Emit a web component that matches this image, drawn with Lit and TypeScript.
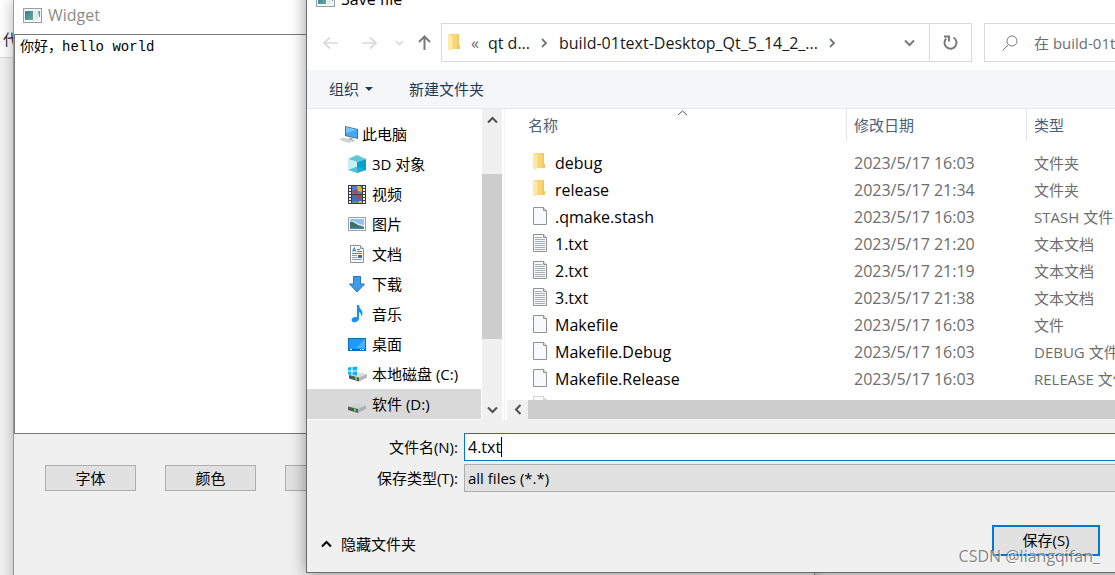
import { LitElement, html, css, svg } from "lit";
import { customElement } from "lit/decorators.js";

const sans = css`"Open Sans", "Noto Sans", "Noto Sans CJK SC", sans-serif`;

const glyphs: Record<string, unknown> = {
  app: svg`
    <defs><linearGradient id="app" x1="0" y1="0" x2="1" y2="1"><stop offset="0" stop-color="#3f74a8"/><stop offset="1" stop-color="#5cb487"/></linearGradient></defs>
    <rect x=".5" y=".5" width="18" height="14" fill="#f4f5f6" stroke="#9a9ea6"/>
    <rect x="2" y="3" width="8" height="9" fill="url(#app)"/>
    <rect x="11" y="3" width="4" height="9" fill="#e6e9ea"/>
    <path d="M15 3h2v6h-1z" fill="#58a98c"/>`,
  back: svg`<path d="M16 8H2M8 2.500L2 8L8 13.500" fill="none" stroke="currentColor" stroke-width="1.700"/>`,
  forward: svg`<path d="M1 8H15M9 2.500L15 8L9 13.500" fill="none" stroke="currentColor" stroke-width="1.700"/>`,
  up: svg`<path d="M6.500 15V1.500M1 7L6.500 1.500L12 7" fill="none" stroke="currentColor" stroke-width="2"/>`,
  down: svg`<path d="M1 1.500L5.500 6L10 1.500" fill="none" stroke="currentColor" stroke-width="2"/>`,
  recent: svg`<path d="M1 1L4.500 4.500L8 1" fill="none" stroke="currentColor" stroke-width="1.700"/>`,
  chevronUp: svg`<path d="M1 6.500L5.500 2L10 6.500" fill="none" stroke="currentColor" stroke-width="2"/>`,
  sort: svg`<path d="M1 5L5.500 1L10 5" fill="none" stroke="currentColor" stroke-width="1"/>`,
  right: svg`<path d="M1 1L5 5L1 9" fill="none" stroke="currentColor" stroke-width="1.800"/>`,
  left: svg`<path d="M6.500 1L2 5.500L6.500 10" fill="none" stroke="currentColor" stroke-width="2"/>`,
  caret: svg`<path d="M0 0h8L4 4z" fill="currentColor"/>`,
  refresh: svg`<path d="M10.500 2.500A6 6 0 1 1 3.200 3.500" fill="none" stroke="currentColor" stroke-width="2"/><path d="M1 1.500h5v5" fill="none" stroke="currentColor" stroke-width="2"/>`,
  search: svg`<circle cx="10" cy="6" r="5" fill="none" stroke="currentColor"/><path d="M6.300 9.700L.5 15.500" stroke="currentColor" fill="none"/>`,
  folder: svg`
    <defs><linearGradient id="fold" x1="0" y1="0" x2="1" y2="0"><stop offset="0" stop-color="#f5d178"/><stop offset="1" stop-color="#fad878"/></linearGradient></defs>
    <path d="M1 0H11V11H12V15H1z" fill="url(#fold)"/>
    <path d="M9 0h2v11h1v4H9z" fill="#f1c962"/>
    <path d="M0 0L4.500 2V14.500L3 17L0 15z" fill="#ffe9a6"/>`,
  file: svg`
    <path d="M.5 .5H10.500L13.500 3.500V17.500H.5z" fill="#f8f9fa" stroke="#8f9193"/>
    <path d="M10.500 .5V3.500H13.500" fill="#dfe1e3" stroke="#8f9193"/>`,
  text: svg`
    <path d="M.5 .5H10.500L13.500 3.500V17.500H.5z" fill="#f8f9fa" stroke="#8f9193"/>
    <path d="M10.500 .5V3.500H13.500" fill="#dfe1e3" stroke="#8f9193"/>
    <path d="M2 3.500H9M2 5.500H12M2 7.500H12M2 9.500H12M2 11.500H12M2 13.500H12M2 15.500H12" stroke="#a9abad"/>`,
  computer: svg`
    <path d="M6 0L19 3V13L6 10z" fill="#5c6b78"/>
    <path d="M7 1L18 3.700V12L7 9.300z" fill="#3fa9f5"/>
    <path d="M7 1L18 3.700L7 7z" fill="#74c5fb"/>
    <path d="M11 11.500l3 .7-1 1.500 3 1-2 1-5-2z" fill="#a3abb3"/>
    <path d="M0 13.500L4 11.500L14 14.500L10 17z" fill="#cdd2d6"/>`,
  cube: svg`
    <path d="M9 0L18 4L9 7L0 4z" fill="#5ac8d8"/>
    <path d="M0 4L9 7V18L0 15z" fill="#c8f1f2"/>
    <path d="M18 4L9 7V18L18 15z" fill="#0a9fce"/>
    <path d="M0 15L9 11.500L18 15L9 18z" fill="#2bb4cf" opacity=".75"/>`,
  video: svg`
    <rect width="18" height="19" fill="#3b3b3f"/>
    <rect x="4" y="1" width="10" height="8" fill="#4d7fd0"/>
    <rect x="4" y="10" width="10" height="8" fill="#3f6ec4"/>
    <path d="M9 1h3l2 3v3l-4-1z" fill="#e5b91f"/><path d="M4 7l3-2 4 2-4 2z" fill="#d23b32"/>
    <path d="M9 10h4v2l-3 2z" fill="#c4412f"/><path d="M4 17l4-1 2 2H4z" fill="#56a653"/><path d="M11 16h3v2h-4z" fill="#dfbd3b"/>
    <path d="M2 1V18M16 1V18" stroke="#f2f2f2" stroke-width="2" stroke-dasharray="2 1"/>`,
  picture: svg`
    <rect x=".5" y=".5" width="17" height="13" fill="#fff" stroke="#9b9fa4"/>
    <rect x="2" y="2" width="14" height="10" fill="#8fc3ee"/>
    <path d="M2 5l4-1 5 3 5 1v4H2z" fill="#d6e9f2"/>
    <path d="M2 5l3 0 5 3 6 2v2H2z" fill="#3e6f67"/><path d="M2 10h14v2H2z" fill="#447da4"/>`,
  document: svg`
    <path d="M.5 .5H10.500L13.500 3.500V17.500H.5z" fill="#fbfcfd" stroke="#8f9193"/>
    <path d="M10.500 .5V3.500H13.500" fill="#dfe1e3" stroke="#8f9193"/>
    <path d="M2.500 6.500L4.500 2.500L5.500 6.500M3 5.500h2" stroke="#2a7fc5" fill="none"/>
    <path d="M7 4.500h3M7 6.500h5M2 8.500h10" stroke="#2a8fd8"/>
    <path d="M2 10.500h5M2 12.500h5M2 14.500h10" stroke="#8f9aa4"/><rect x="8" y="10" width="4" height="3" fill="#35719e"/>`,
  download: svg`<path d="M4.500 .5h7V8H15.500L8 16L.5 8H4.500z" fill="#3f9ae8" stroke="#2377c6"/>`,
  music: svg`<path d="M6 0H8C8 4 12 4.500 11.500 9.500L10 11.500C10.500 8.500 9 7.500 8 7V13C8 16 4.500 18 2 17C-.5 16 .5 12 4 12C5 11.800 6 12.200 6 12.500z" fill="#0f93f4"/>`,
  desktop: svg`
    <rect x=".5" y=".5" width="17" height="12" fill="#1b9cf6" stroke="#0d6cbb"/>
    <path d="M17 1L8 10H17z" fill="#45b3ff"/>
    <path d="M1 11.500H17" stroke="#0a5ea8"/><path d="M2 11.500h2M12 11.500h1M14 11.500h2" stroke="#fff"/>`,
  windrive: svg`
    <path d="M1 9L9 6L19 8L11 11.500z" fill="#dcdee0"/><path d="M1 9L11 11.500V15.500L1 12.500z" fill="#55585b"/>
    <path d="M11 11.500L19 8V11.500L11 15.500z" fill="#b4b7ba"/><rect x="7" y="11" width="2" height="3" fill="#3fdc4a"/>
    <path d="M0 1.500L3.500 1V4.500H0zM4.500 1L9 .5V4.500H4.500zM0 5.500H3.500V9L0 8.500zM4.500 5.500H9V9.500L4.500 9z" fill="#12b5ea"/>`,
  drive: svg`
    <path d="M0 10.500L8 7.500L18 9.500L10 13z" fill="#d0d2d4"/><path d="M0 10.500L10 13V17L0 14z" fill="#55585b"/>
    <path d="M10 13L18 9.500V13L10 17z" fill="#aeb1b4"/><rect x="6" y="12.500" width="2" height="3" fill="#3fdc4a"/>`,
};

const sizes: Record<string, [number, number]> = {
  app: [19, 15], back: [16, 16], forward: [16, 16], up: [13, 16], down: [11, 8], recent: [9, 6], chevronUp: [11, 8],
  sort: [11, 6], right: [7, 10], left: [8, 11], caret: [8, 4], refresh: [15, 15], search: [16, 16],
  folder: [12, 17], file: [14, 18], text: [14, 18], computer: [19, 17], cube: [18, 18], video: [18, 19],
  picture: [18, 14], document: [14, 18], download: [16, 17], music: [12, 18], desktop: [18, 13],
  windrive: [19, 16], drive: [18, 17],
};

const icon = (name: string) => {
  const [w, h] = sizes[name];
  return html`<svg class="icon" width=${w} height=${h} viewBox="0 0 ${w} ${h}" aria-hidden="true">${glyphs[name]}</svg>`;
};

const base = css`
  * { box-sizing: border-box; }
  .icon { display: block; flex: none; overflow: visible; }
  button, input, select, textarea { font: inherit; color: inherit; margin: 0; border-radius: 0; outline: none; }
  a { color: inherit; text-decoration: none; }
`;

@customElement("widget-window")
class WidgetWindow extends LitElement {
  static styles = [base, css`
    :host { display: flex; flex-direction: column; background: #f0f0f0; }
    .title { display: flex; align-items: center; gap: 6px; height: 34px; padding: 0 9px 4px; background: #fff; color: #8c8c8c; font: 16px/20px ${sans}; }
    .editor { display: block; width: 100%; height: 400px; resize: none; border: 1px solid #7a7a7a; padding: 4px 5px; background: #fff; color: #000; font: 14px/17px "Liberation Mono", "Noto Sans CJK SC", monospace; }
    .buttons { display: flex; gap: 29px; padding: 31px; }
    .buttons button { width: 91px; height: 26px; padding: 0; border: 1px solid #adadad; background: #e1e1e1; font: 15px/20px "Noto Sans CJK SC", sans-serif; }
  `];
  render() {
    return html`
      <div class="title">${icon("app")}<span>Widget</span></div>
      <textarea class="editor" aria-label="Widget" spellcheck="false" .value=${"你好，hello world"}></textarea>
      <div class="buttons"><button>字体</button><button>颜色</button><button></button></div>`;
  }
}

@customElement("place-tree")
class PlaceTree extends LitElement {
  static styles = [base, css`
    :host { display: flex; width: 196px; border-right: 1px solid #fff; }
    .list { flex: 1; margin: 0; padding: 10px 1px 0 0; list-style: none; }
    .item { display: grid; grid-template-columns: 18px 1fr; align-items: center; gap: 6px; height: 30px; padding-left: 41px; white-space: nowrap; }
    .item .icon { justify-self: center; }
    .item.root { grid-template-columns: 19px 1fr; gap: 4px; padding-left: 32px; }
    .selected { background: #d9d9d9; }
    .bar { display: flex; flex-direction: column; width: 20px; background: #f0f0f0; }
    .bar button { display: grid; place-items: center; height: 21px; border: 0; padding: 0; background: none; color: #505050; }
    .track { flex: 1; display: flex; padding: 44px 0 60px; }
    .thumb { flex: 1; background: #cdcdcd; }
  `];
  private places = [
    ["computer", "此电脑"], ["cube", "3D 对象"], ["video", "视频"], ["picture", "图片"], ["document", "文档"],
    ["download", "下载"], ["music", "音乐"], ["desktop", "桌面"], ["windrive", "本地磁盘 (C:)"], ["drive", "软件 (D:)"],
  ];
  render() {
    const last = this.places.length - 1;
    return html`
      <ul class="list">${this.places.map(([name, label], i) => html`
        <li><a href="#" class="item ${i === 0 ? "root" : ""} ${i === last ? "selected" : ""}">${icon(name)}<span>${label}</span></a></li>`)}
      </ul>
      <div class="bar">
        <button aria-label="向上">${icon("chevronUp")}</button>
        <div class="track"><div class="thumb"></div></div>
        <button aria-label="向下">${icon("down")}</button>
      </div>`;
  }
}

@customElement("file-list")
class FileList extends LitElement {
  static styles = [base, css`
    :host { display: flex; flex-direction: column; min-width: 0; }
    .view { flex: 1; min-height: 0; overflow: hidden; }
    table { width: 100%; table-layout: fixed; border-collapse: separate; border-spacing: 0; }
    th { position: relative; height: 32px; padding: 0 0 0 7px; text-align: left; font-weight: normal; color: #4c607a; border-left: 1px solid #e5e5e5; }
    th:first-child { padding-left: 21px; border-left: 0; }
    .date { width: 180px; }
    .type { width: 218px; }
    .sort { position: absolute; top: 1px; left: 50%; color: #5a5a5a; }
    td { height: 27px; padding: 0 0 0 8px; color: #6d6d6d; white-space: nowrap; overflow: hidden; }
    .stamp { font-size: 16px; }
    tbody::before { content: ""; display: block; height: 8px; }
    .name { display: grid; grid-template-columns: 14px 1fr; gap: 8px; align-items: center; height: 27px; padding-left: 18px; color: #000; font-size: 16px; }
    .name .icon { margin-bottom: 2px; }
    .bar { display: flex; height: 20px; background: #f0f0f0; padding-bottom: 1px; }
    .bar button { display: grid; place-items: center; width: 21px; padding: 0; border: 0; background: none; color: #505050; }
    .thumb { flex: 1; background: #cdcdcd; }
    .faded { opacity: .4; }
  `];
  private files = [
    ["folder", "debug", "2023/5/17 16:03", "文件夹"],
    ["folder", "release", "2023/5/17 21:34", "文件夹"],
    ["file", ".qmake.stash", "2023/5/17 16:03", "STASH 文件"],
    ["text", "1.txt", "2023/5/17 21:20", "文本文档"],
    ["text", "2.txt", "2023/5/17 21:19", "文本文档"],
    ["text", "3.txt", "2023/5/17 21:38", "文本文档"],
    ["file", "Makefile", "2023/5/17 16:03", "文件"],
    ["file", "Makefile.Debug", "2023/5/17 16:03", "DEBUG 文件"],
    ["file", "Makefile.Release", "2023/5/17 16:03", "RELEASE 文件"],
    ["file", "", "", ""],
  ];
  render() {
    return html`
      <div class="view"><table>
        <thead><tr><th>名称<span class="sort">${icon("sort")}</span></th><th class="date">修改日期</th><th class="type">类型</th></tr></thead>
        <tbody>${this.files.map(([kind, name, date, type]) => html`
          <tr class=${name ? "" : "faded"}><td><div class="name">${icon(kind)}<span>${name}</span></div></td><td class="stamp">${date}</td><td>${type}</td></tr>`)}
        </tbody>
      </table></div>
      <div class="bar"><button aria-label="向左">${icon("left")}</button><div class="thumb"></div></div>`;
  }
}

@customElement("save-dialog")
class SaveDialog extends LitElement {
  static styles = [base, css`
    :host { display: flex; flex-direction: column; background: #f0f0f0; border: 1px solid #6b6b6b; color: #000; font: 15px/20px ${sans}; }
    .top { background: #fff; }
    .title { display: flex; align-items: center; gap: 6px; height: 32px; padding: 0 9px; font-size: 16px; }
    .nav { display: flex; align-items: center; padding: 8px 20px 8px 15px; color: #7a7a7a; }
    .nav button { display: grid; place-items: center; border: 0; padding: 0; background: none; color: inherit; height: 37px; }
    .nav .off { color: #d9d9d9; }
    .arrows { display: grid; grid-template-columns: 39px 34px 23px 23px; width: 119px; }
    .arrows button { justify-items: start; }
    .address { flex: 1; display: flex; align-items: center; height: 39px; border: 1px solid #d9d9d9; min-width: 0; }
    .crumbs { flex: 1; display: flex; align-items: center; padding-left: 6px; white-space: nowrap; color: #1a1a1a; font-size: 16px; }
    .crumbs .icon { color: #757575; }
    .crumbs a { margin: 0 11px; }
    .more { margin-left: 11px; color: #666; }
    .crumbs .more + a { margin-left: 9px; }
    .drop { width: 40px; }
    .nav .reload { width: 42px; border-left: 1px solid #d9d9d9; }
    .search { display: flex; align-items: center; gap: 16px; width: 240px; height: 39px; margin-left: 12px; padding-left: 17px; border: 1px solid #d9d9d9; }
    .search input { flex: 1; min-width: 0; border: 0; padding: 0; background: none; }
    .search input::placeholder { color: #6d6d6d; opacity: 1; }
    .tools { display: flex; gap: 36px; height: 39px; padding: 0 22px; background: #f5f6f7; border-bottom: 1px solid #e5e7ea; color: #1e395b; }
    .tools button { display: flex; align-items: center; gap: 6px; padding: 0; border: 0; background: none; }
    .body { display: flex; height: 311px; background: #fff; }
    .split { width: 4px; border-right: 2px solid #fff; border-left: 1px solid #fff; background: #f3f3f3; }
    file-list { flex: 1; }
    .form { display: grid; grid-template-columns: 151px 1fr; column-gap: 6px; row-gap: 3px; padding: 13px 20px 0 0; align-items: center; }
    .form label { text-align: right; }
    .box { display: flex; align-items: center; height: 28px; border: 1px solid #0078d7; background: #fff; padding: 0 3px 1px; font-size: 16px; }
    .box input { field-sizing: content; border: 0; padding: 0; background: none; }
    .cursor { width: 1px; height: 20px; background: #000; }
    .form select { width: 100%; height: 28px; padding: 0 3px; border: 1px solid #adadad; background: #e1e1e1; appearance: none; }
    .foot { display: flex; align-items: center; justify-content: space-between; padding: 33px 144px 16px 14px; }
    .hide { display: flex; align-items: center; gap: 9px; border: 0; padding: 7px 0 0; background: none; }
    .save { width: 108px; height: 31px; padding: 0 0 2px; border: 2px solid #0078d7; background: #e1e1e1; }
  `];
  render() {
    return html`
      <div class="top">
        <div class="title">${icon("app")}<span>Save file</span></div>
        <div class="nav">
          <div class="arrows">
            <button class="off" aria-label="后退">${icon("back")}</button>
            <button class="off" aria-label="前进">${icon("forward")}</button>
            <button class="off" aria-label="最近">${icon("recent")}</button>
            <button aria-label="上移">${icon("up")}</button>
          </div>
          <div class="address">
            <div class="crumbs">${icon("folder")}<span class="more">«</span><a href="#">qt d...</a>${icon("right")}<a href="#">build-01text-Desktop_Qt_5_14_2_...</a>${icon("right")}</div>
            <button class="drop" aria-label="历史">${icon("down")}</button>
            <button class="reload" aria-label="刷新">${icon("refresh")}</button>
          </div>
          <div class="search">${icon("search")}<input type="text" aria-label="搜索" placeholder="在 build-01text" /></div>
        </div>
        <div class="tools"><button>组织 ${icon("caret")}</button><button>新建文件夹</button></div>
      </div>
      <div class="body"><place-tree></place-tree><div class="split"></div><file-list></file-list></div>
      <div class="form">
        <label for="name">文件名(N):</label>
        <div class="box"><input id="name" type="text" value="4.txt" spellcheck="false" /><span class="cursor"></span></div>
        <label for="kind">保存类型(T):</label>
        <select id="kind"><option>all files (*.*)</option></select>
      </div>
      <div class="foot">
        <button class="hide">${icon("chevronUp")}<span>隐藏文件夹</span></button>
        <button class="save">保存(S)</button>
      </div>`;
  }
}

@customElement("app-root")
class AppRoot extends LitElement {
  static styles = [base, css`
    :host { display: block; position: relative; height: 100vh; overflow: hidden; background: #f3f3f3; font: 15px/20px ${sans}; }
    .backdrop { height: 58px; padding: 29px 0 0 3px; background: #fff; border-bottom: 1px solid #dcdcdc; color: #2a2a4a; }
    widget-window { position: absolute; left: 13px; top: 0; width: 802px; height: 110vh; border-left: 1px solid #9a9a9a; border-right: 1px solid #8a8a8a; box-shadow: 0 0 14px rgba(0, 0, 0, .3); }
    save-dialog { position: absolute; left: 306px; right: -130px; top: -18px; box-shadow: 0 2px 16px rgba(0, 0, 0, .4); }
    .mark { position: absolute; right: 15px; bottom: 8px; color: rgba(120, 120, 120, .9); font: 16px/22px ${sans}; text-shadow: 1px 1px 0 rgba(255, 255, 255, .8); }
  `];
  render() {
    return html`
      <div class="backdrop">代</div>
      <widget-window></widget-window>
      <save-dialog></save-dialog>
      <div class="mark">CSDN @liangqifan_</div>`;
  }
}
